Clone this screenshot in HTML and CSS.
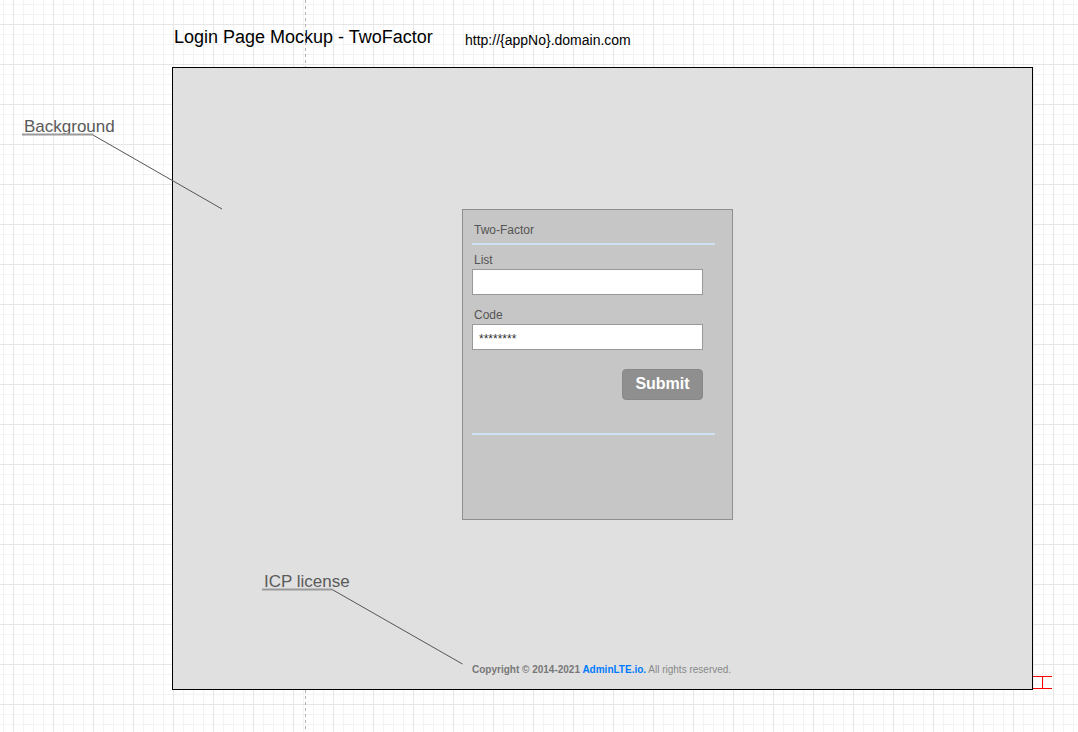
FILE: index.html
```html
<!DOCTYPE html>
<html>
<head>
<meta charset="utf-8">
<title>Login Page Mockup - TwoFactor</title>
<link rel="stylesheet" href="styles.css">
</head>
<body>
<div class="canvas">
  <div class="title">Login Page Mockup - TwoFactor</div>
  <div class="url">http://{appNo}.domain.com</div>

  <div class="frame">
    <div class="card">
      <div class="card-title">Two-Factor</div>
      <div class="sep"></div>
      <div class="label label-first">List</div>
      <div class="input"></div>
      <div class="label label-next">Code</div>
      <div class="input"><span class="stars">********</span></div>
      <div class="actions"><div class="btn">Submit</div></div>
      <div class="sep sep-bottom"></div>
    </div>
    <div class="copyright"><b>Copyright © 2014-2021 <span class="brand">AdminLTE.io.</span></b> All rights reserved.</div>
  </div>

  <div class="note note-bg">Background</div>
  <div class="note note-icp">ICP license</div>

  <svg class="wires" width="1078" height="732" viewBox="0 0 1078 732">
    <line x1="305.5" y1="0" x2="305.5" y2="67" stroke="#b3b3b3" stroke-dasharray="3 3"/>
    <line x1="305.5" y1="690" x2="305.5" y2="732" stroke="#b3b3b3" stroke-dasharray="3 3"/>
    <line x1="22" y1="134.5" x2="93" y2="134.5" stroke="#9a9a9a" stroke-width="2"/>
    <line x1="93" y1="135" x2="222" y2="209" stroke="#555" stroke-width="1"/>
    <line x1="262" y1="589.5" x2="333" y2="589.5" stroke="#9a9a9a" stroke-width="2"/>
    <line x1="333" y1="590" x2="462.5" y2="664" stroke="#555" stroke-width="1"/>
    <line x1="1033" y1="676.5" x2="1052" y2="676.5" stroke="#ff0000"/>
    <line x1="1033" y1="688.5" x2="1052" y2="688.5" stroke="#ff0000"/>
    <line x1="1042.5" y1="676.5" x2="1042.5" y2="688.5" stroke="#ff0000"/>
  </svg>
</div>
</body>
</html>
```
FILE: styles.css
```css
html, body {
  margin: 0;
  padding: 0;
}
body {
  font-family: "Liberation Sans", Arial, Helvetica, sans-serif;
}
.canvas {
  position: relative;
  width: 1078px;
  height: 732px;
  overflow: hidden;
  background-color: #ffffff;
  background-image:
    linear-gradient(to right, #e6e6e6 1px, transparent 1px),
    linear-gradient(to bottom, #e6e6e6 1px, transparent 1px),
    linear-gradient(to right, #f3f3f3 1px, transparent 1px),
    linear-gradient(to bottom, #f3f3f3 1px, transparent 1px);
  background-size: 40px 40px, 40px 40px, 10px 10px, 10px 10px;
  background-position: 13px 0, 0 24px, 3px 0, 0 4px;
}
.title {
  position: absolute;
  left: 174px;
  top: 28px;
  font-size: 18px;
  line-height: 18px;
  color: #000;
  white-space: nowrap;
}
.url {
  position: absolute;
  left: 465px;
  top: 33px;
  font-size: 14px;
  line-height: 14px;
  color: #000;
  white-space: nowrap;
}
.frame {
  position: absolute;
  left: 172px;
  top: 67px;
  width: 859px;
  height: 621px;
  border: 1px solid #000;
  background: #e0e0e0;
}
.card {
  position: absolute;
  left: 289px;
  top: 141px;
  width: 243px;
  height: 296px;
  border: 1px solid #8f8f8f;
  background: #c6c6c6;
  padding: 13px 17px 0 9px;
  display: flex;
  flex-direction: column;
  align-items: flex-start;
}
.card-title {
  font-size: 12px;
  line-height: 14px;
  color: #555;
  padding-left: 2px;
}
.sep {
  align-self: stretch;
  height: 2px;
  margin-top: 6px;
  background: #cfe2f3;
}
.sep-bottom {
  margin-top: 33px;
}
.label {
  font-size: 12px;
  line-height: 14px;
  color: #555;
  padding-left: 2px;
}
.label-first {
  margin-top: 8px;
}
.label-next {
  margin-top: 13px;
}
.input {
  margin-top: 2px;
  width: 231px;
  height: 26px;
  box-sizing: border-box;
  border: 1px solid #999;
  background: #fff;
  display: flex;
  align-items: center;
  padding-left: 6px;
}
.stars {
  font-size: 12px;
  line-height: 12px;
  color: #333;
  margin-top: 3px;
}
.actions {
  margin-top: 19px;
  width: 231px;
  display: flex;
  justify-content: flex-end;
}
.btn {
  width: 81px;
  height: 31px;
  box-sizing: border-box;
  border: 1px solid #888;
  border-radius: 4px;
  background: #8f8f8f;
  color: #fff;
  font-weight: bold;
  font-size: 16px;
  line-height: 27px;
  padding-bottom: 2px;
  text-align: center;
}
.copyright {
  position: absolute;
  left: 299px;
  top: 597px;
  font-size: 10px;
  line-height: 10px;
  color: #888;
  white-space: nowrap;
}
.copyright b {
  color: #777;
}
.copyright .brand {
  color: #007bff;
}
.note {
  position: absolute;
  font-size: 17px;
  line-height: 17px;
  color: #5a5a5a;
  white-space: nowrap;
}
.note-bg {
  left: 24px;
  top: 118px;
}
.note-icp {
  left: 264px;
  top: 573px;
}
.wires {
  position: absolute;
  left: 0;
  top: 0;
  pointer-events: none;
}
```
